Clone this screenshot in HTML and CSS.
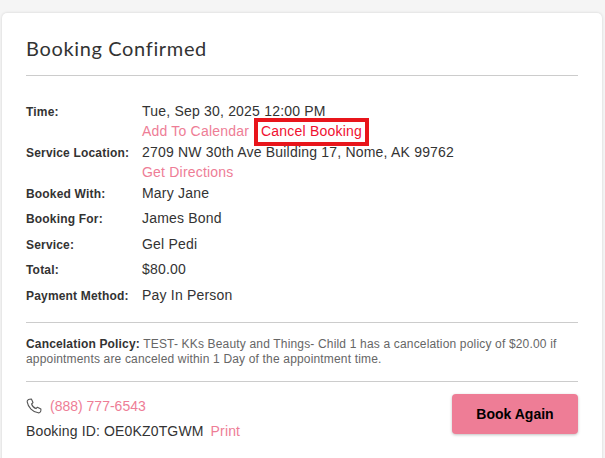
FILE: index.html
```html
<!DOCTYPE html>
<html lang="en">
<head>
    <meta name="viewport" content="width=device-width, initial-scale=1.0">
    <link rel="stylesheet" href="styles.css">
    <title>Booking Confirmed</title>
</head>

<body>
    <div class="card">
        <h1 class="title">Booking Confirmed</h1>

        <div class="details">
            <div class="label">Time:</div>
            <div class="value">
                <div>Tue, Sep 30, 2025 12:00 PM</div>
                <div><a class="link">Add To Calendar</a><a class="link cancel">Cancel Booking</a></div>
            </div>

            <div class="label">Service Location:</div>
            <div class="value">
                <div>2709 NW 30th Ave Building 17, Nome, AK 99762</div>
                <div><a class="link">Get Directions</a></div>
            </div>

            <div class="label">Booked With:</div>
            <div class="value single">Mary Jane</div>

            <div class="label">Booking For:</div>
            <div class="value single">James Bond</div>

            <div class="label">Service:</div>
            <div class="value single">Gel Pedi</div>

            <div class="label">Total:</div>
            <div class="value single">$80.00</div>

            <div class="label">Payment Method:</div>
            <div class="value">Pay In Person</div>
        </div>

        <p class="policy"><b>Cancelation Policy:</b> TEST- KKs Beauty and Things- Child 1 has a cancelation policy of $20.00 if appointments are canceled within 1 Day of the appointment time.</p>

        <div class="footer">
            <div class="contact">
                <div class="phone">
                    <svg class="phone-icon" viewBox="0 0 16 16" width="16" height="16">
                        <path d="M3.6 1.2 L5.4 1.1 L7 4.6 L5.6 6 C6.2 8 7.9 9.9 10 10.6 L11.4 9.2 L14.9 11 L14.8 12.9 C14.6 14.2 13.4 15 12.2 14.8 C6.8 14 2 9.2 1.2 3.8 C1 2.6 2.2 1.4 3.6 1.2 Z" fill="none" stroke="#555" stroke-width="1.1" stroke-linejoin="round"/>
                    </svg>
                    <a class="link">(888) 777-6543</a>
                </div>
                <div>Booking ID: OE0KZ0TGWM <a class="link print">Print</a></div>
            </div>
            <button class="again">Book Again</button>
        </div>
    </div>
</body>
</html>
```

FILE: styles.css
```css
body {
    margin: 0;
    height: 458px;
    overflow: hidden;
    padding: 13px 3px 0 2px;
    box-sizing: border-box;
    background-color: #f5f5f5;
    font-family: "Liberation Sans", Arial, sans-serif;
    color: #333;
}

.card {
    height: 460px;
    padding: 0 24px;
    background-color: white;
    border-radius: 5px;
    box-shadow: 0 0 3px rgba(0, 0, 0, 0.15);
}

.title {
    margin: 0;
    padding: 23px 0 14px;
    font-family: "Lato", sans-serif;
    font-size: 20px;
    line-height: 25px;
    font-weight: 400;
    letter-spacing: 0.65px;
    border-bottom: 1px solid #ccc;
}

.details {
    display: grid;
    grid-template-columns: 116px 1fr;
    padding-top: 24.9px;
}

.label {
    font-size: 12px;
    font-weight: bold;
    line-height: 22.5px;
    letter-spacing: 0.18px;
}

.value {
    font-size: 14px;
    line-height: 20.5px;
    letter-spacing: 0.2px;
}

.single {
    margin-bottom: 5px;
}

.link {
    color: #ee7d96;
}

.cancel {
    margin-left: 10px;
    padding: 0 2px 2px;
    color: #f01030;
    outline: 4px solid #e8151b;
    outline-offset: 1px;
}

.policy {
    margin: 14.6px 0 0;
    padding: 14px 0;
    border-top: 1px solid #ccc;
    border-bottom: 1px solid #ccc;
    font-size: 12px;
    line-height: 15px;
    letter-spacing: 0.17px;
    color: #666;
}

.policy b {
    color: #333;
}

.footer {
    display: flex;
    justify-content: space-between;
    align-items: flex-start;
    padding-top: 12px;
}

.contact {
    padding-top: 2px;
    font-size: 14px;
    line-height: 20px;
    letter-spacing: 0.15px;
}

.phone {
    display: flex;
    align-items: center;
    gap: 8px;
    margin-bottom: 5px;
    letter-spacing: 0;
}

.phone-icon {
    flex: none;
}

.print {
    margin-left: 3px;
}

.again {
    width: 126px;
    height: 40px;
    border: 0;
    border-radius: 4px;
    background-color: #ee7d96;
    font-family: "Liberation Sans", Arial, sans-serif;
    font-size: 14px;
    font-weight: bold;
    color: black;
    box-shadow: 0 1px 3px rgba(0, 0, 0, 0.25);
}
```
